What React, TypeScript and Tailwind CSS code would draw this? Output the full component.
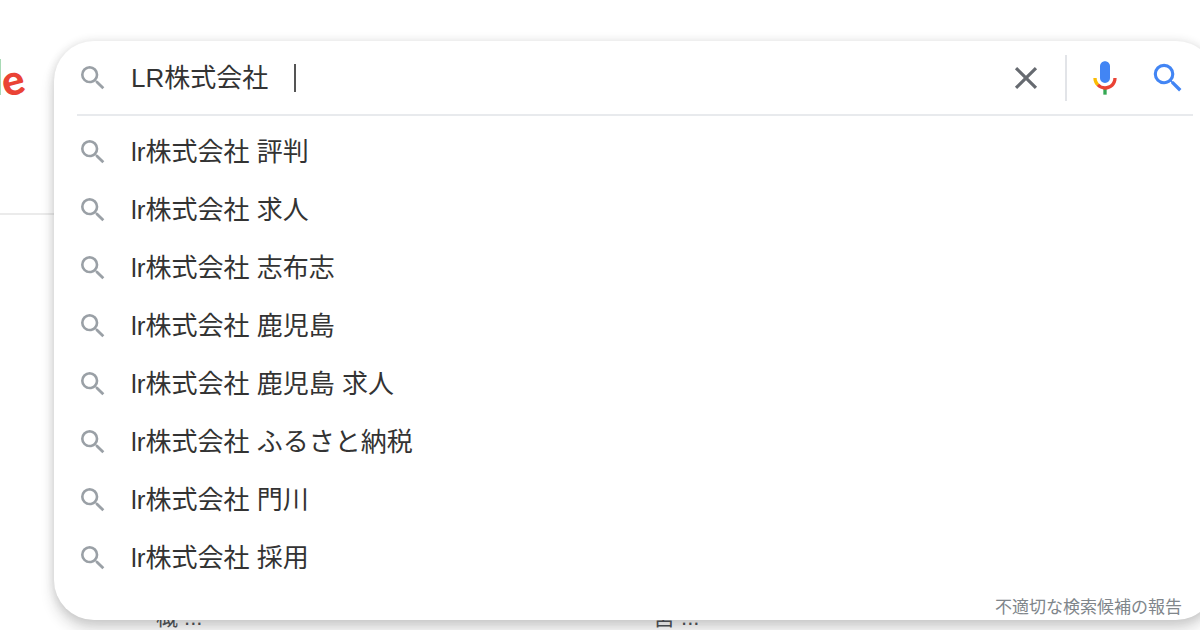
import React, { useState } from 'react';

const SUGGESTIONS = [
    'lr株式会社 評判',
    'lr株式会社 求人',
    'lr株式会社 志布志',
    'lr株式会社 鹿児島',
    'lr株式会社 鹿児島 求人',
    'lr株式会社 ふるさと納税',
    'lr株式会社 門川',
    'lr株式会社 採用',
];

const SearchIcon: React.FC<{ className: string }> = ({ className }) => (
    <svg viewBox="0 0 24 24" fill="currentColor" aria-hidden="true" className={className}>
        <path d="M15.5 14h-.79l-.28-.27A6.471 6.471 0 0 0 16 9.5 6.5 6.5 0 1 0 9.5 16c1.61 0 3.09-.59 4.23-1.57l.27.28v.79l5 4.99L20.49 19l-4.99-5zm-6 0C7.01 14 5 11.99 5 9.5S7.01 5 9.5 5 14 7.01 14 9.5 11.99 14 9.5 14z" />
    </svg>
);

const CloseIcon = () => (
    <svg viewBox="0 0 24 24" fill="currentColor" aria-hidden="true" className="size-[38px] text-[#666a70]">
        <path d="M19 6.41L17.59 5 12 10.59 6.41 5 5 6.41 10.59 12 5 17.59 6.41 19 12 13.41 17.59 19 19 17.59 13.41 12z" />
    </svg>
);

const MicIcon = () => (
    <svg viewBox="0 0 24 24" aria-hidden="true" className="size-10">
        <path fill="#4285f4" d="m12 15c1.66 0 3-1.31 3-2.97v-7.02c0-1.66-1.34-3.01-3-3.01s-3 1.34-3 3.01v7.02c0 1.66 1.34 2.97 3 2.97z" />
        <path fill="#34a853" d="m11 18.08h2v3.92h-2z" />
        <path fill="#fbbc04" d="m7.05 16.87c-1.27-1.33-2.05-2.83-2.05-4.87h2c0 1.45 0.56 2.42 1.47 3.38v0.32l-1.15 1.18z" />
        <path fill="#ea4335" d="m12 16.93a4.97 5.25 0 0 1-3.54-1.55l-1.41 1.49c1.26 1.34 3.02 2.13 4.95 2.13 3.87 0 6.99-2.92 6.99-7h-1.99c0 2.92-2.24 4.93-5 4.93z" />
    </svg>
);

// Results page, mostly hidden under the open search panel
const PageBehind = () => (
    <div className="absolute inset-0 flex flex-col overflow-hidden">
        <header className="flex h-[215px] items-start border-b-2 border-[#ebebeb] pt-[59px] font-['Lato',sans-serif]">
            <span className="h-9 w-px bg-[#a8dab5]" />
            <span className="-rotate-[14deg] text-[42px] leading-10 font-black text-[#ea4335]">e</span>
        </header>
        <div className="mt-auto grid grid-cols-[497px_1fr] pl-[156px] text-[22px] leading-6 text-[#4d5156]">
            <span>概 ...</span>
            <span>営 ...</span>
        </div>
    </div>
);

export default function App() {
    const [query, setQuery] = useState('LR株式会社　');

    return (
        <div className="relative min-h-screen overflow-hidden bg-white pt-[41px] font-['Liberation_Sans','Noto_Sans_CJK_JP',sans-serif]">
            <PageBehind />

            <form
                role="search"
                onSubmit={(e) => e.preventDefault()}
                className="relative -mr-4 ml-[54px] rounded-[40px] bg-white pr-[23px] pl-[23px] text-[26px] text-[#333] shadow-[0_10px_14px_rgba(32,33,36,0.18),0_0_10px_rgba(32,33,36,0.14)]"
            >
                <div className="flex h-[75px] items-center border-b-2 border-[#e8eaed]">
                    <SearchIcon className="size-8 shrink-0 text-[#9aa0a6]" />
                    <div className="ml-[22px] flex flex-1 items-center">
                        <input
                            type="text"
                            aria-label="検索"
                            value={query}
                            onChange={(e) => setQuery(e.target.value)}
                            className="field-sizing-content h-10 bg-transparent pb-1 outline-none"
                        />
                        <span className="h-7 w-0.5 bg-[#555]" />
                    </div>
                    <button type="button" aria-label="クリア" onClick={() => setQuery('')}>
                        <CloseIcon />
                    </button>
                    <span className="ml-5 h-[46px] w-0.5 bg-[#e2e4e8]" />
                    <button type="button" aria-label="音声で検索" className="ml-[18px]">
                        <MicIcon />
                    </button>
                    <button type="submit" aria-label="Google 検索" className="mr-1.5 ml-6">
                        <SearchIcon className="size-[38px] text-[#4285f4]" />
                    </button>
                </div>

                <ul className="pt-[7px]">
                    {SUGGESTIONS.map((s) => (
                        <li key={s}>
                            <button
                                type="button"
                                onClick={() => setQuery(s)}
                                className="flex h-[58px] w-full items-center gap-[22px] text-left"
                            >
                                <SearchIcon className="size-8 shrink-0 text-[#9aa0a6]" />
                                <span>{s}</span>
                            </button>
                        </li>
                    ))}
                </ul>

                <div className="flex h-[33px] items-center justify-end pt-2 pr-[11px]">
                    <a href="#report" className="text-[17px] leading-6 text-[#80868b]">
                        不適切な検索候補の報告
                    </a>
                </div>
            </form>
        </div>
    );
}
